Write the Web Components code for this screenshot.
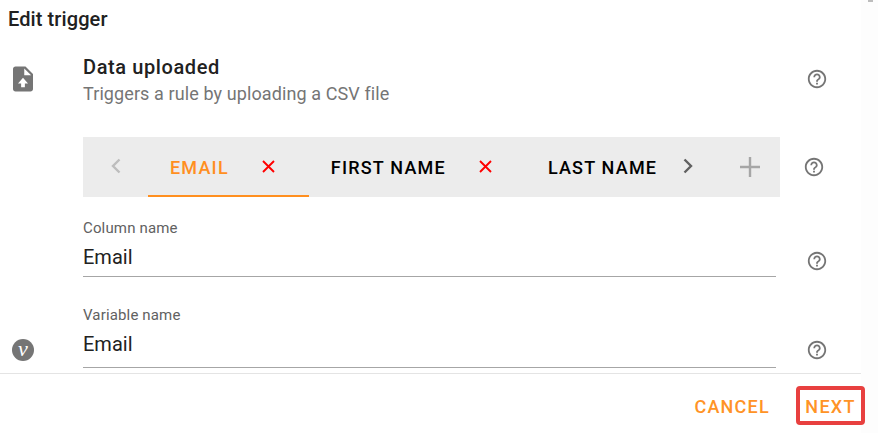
<!DOCTYPE html>
<html>
<head>
<meta charset="utf-8">
<title>Edit trigger</title>
<style>
  html, body { margin: 0; padding: 0; background: #fff; }
  body { font-family: Roboto, "Liberation Sans", sans-serif; }
</style>
</head>
<body>
<edit-trigger-dialog>
  <trigger-row slot="rows">
    <svg slot="lead" width="30" height="30" viewBox="0 0 24 24" fill="#757575"><path d="M14 2H6c-1.100 0-2 .9-2 2v16c0 1.100.9 2 2 2h12c1.100 0 2-.9 2-2V8l-6-6zm-1 7V3.500L18.500 9H13zM12 11l4 4.500h-2.500v3h-3v-3H8l4-4.500z" fill-rule="evenodd"/></svg>
    <trigger-summary heading="Data uploaded" text="Triggers a rule by uploading a CSV file"></trigger-summary>
    <help-icon slot="help"></help-icon>
  </trigger-row>
  <tab-strip slot="rows">
    <tab-item active label="EMAIL"></tab-item>
    <tab-item label="FIRST NAME"></tab-item>
    <tab-item label="LAST NAME"></tab-item>
  </tab-strip>
  <text-field slot="rows" label="Column name" value="Email"></text-field>
  <text-field slot="rows" label="Variable name" value="Email" variable></text-field>
  <flat-button slot="actions" label="CANCEL"></flat-button>
  <flat-button slot="actions" label="NEXT" marked></flat-button>
</edit-trigger-dialog>

<script>
//Help icon
class HelpIcon extends HTMLElement {
  constructor() {
    super();
    this.attachShadow({ mode: "open" });
    this.shadowRoot.innerHTML = `
      <style>
      :host { display: block; width: 22px; height: 22px; }
      svg { display: block; }
      </style>
      <svg width="22" height="22" viewBox="0 0 24 24" fill="#757575"><path d="M11 18h2v-2h-2v2zm1-16C6.480 2 2 6.480 2 12s4.480 10 10 10 10-4.480 10-10S17.520 2 12 2zm0 18c-4.410 0-8-3.590-8-8s3.590-8 8-8 8 3.590 8 8-3.590 8-8 8zm0-14c-2.210 0-4 1.790-4 4h2c0-1.100.9-2 2-2s2 .9 2 2c0 2-3 1.750-3 5h2c0-2.250 3-2.500 3-5 0-2.210-1.790-4-4-4z"/></svg>
    `;
  }
}
customElements.define("help-icon", HelpIcon);

//Top row with the trigger name
class TriggerRow extends HTMLElement {
  constructor() {
    super();
    this.attachShadow({ mode: "open" });
    this.shadowRoot.innerHTML = `
      <style>
      :host { display: grid; grid-template-columns: 83px 723px 22px; height: 54px; margin-top: 16px; }
      .lead { padding: 10px 0 0 8px; }
      .help { padding-top: 14px; }
      </style>
      <div class="lead"><slot name="lead"></slot></div>
      <div><slot></slot></div>
      <div class="help"><slot name="help"></slot></div>
    `;
  }
}
customElements.define("trigger-row", TriggerRow);

class TriggerSummary extends HTMLElement {
  constructor() {
    super();
    this.attachShadow({ mode: "open" });
    this.shadowRoot.innerHTML = `
      <style>
      :host { display: block; }
      .heading { font-size: 20px; font-weight: 500; line-height: 26px; letter-spacing: .6px; color: #212121; }
      .text { font-size: 18px; line-height: 26px; margin-top: 1px; letter-spacing: .1px; color: #757575; }
      </style>
      <div class="heading">${this.getAttribute("heading")}</div>
      <div class="text">${this.getAttribute("text")}</div>
    `;
  }
}
customElements.define("trigger-summary", TriggerSummary);

//Tabs
class TabItem extends HTMLElement {
  constructor() {
    super();
    this.attachShadow({ mode: "open" });
    this.shadowRoot.innerHTML = `
      <style>
      :host { display: flex; flex: none; align-items: center; height: 60px; box-sizing: border-box; padding: 2px 33px 0 22px; color: #000; border-bottom: 2px solid transparent; }
      :host([active]) { color: #ff8f1f; border-bottom-color: #ff8f1f; }
      .label { font-size: 18px; font-weight: 500; letter-spacing: 1.2px; margin-right: 32px; white-space: nowrap; }
      svg { display: block; flex: none; margin-top: -2px; }
      </style>
      <span class="label">${this.getAttribute("label")}</span>
      <svg width="15" height="15" viewBox="0 0 15 15"><path d="M2 2l11 11M13 2L2 13" stroke="#ff0000" stroke-width="1.900" fill="none"/></svg>
    `;
  }
}
customElements.define("tab-item", TabItem);

class TabStrip extends HTMLElement {
  constructor() {
    super();
    this.attachShadow({ mode: "open" });
    this.shadowRoot.innerHTML = `
      <style>
      :host { display: grid; grid-template-columns: 697px 1fr; margin: 29px 0 0 83px; align-items: center; }
      .bar { display: flex; align-items: center; height: 60px; background: #ececec; }
      .arrow { flex: none; display: flex; justify-content: center; align-items: center; margin-top: -2px; }
      .prev { width: 65px; }
      .next { width: 40px; }
      .tabs { display: flex; width: 520px; flex: none; overflow: hidden; }
      .add { flex: none; margin-left: 32px; display: block; }
      .help { padding-left: 23px; }
      svg { display: block; }
      </style>
      <div class="bar">
        <div class="arrow prev"><svg width="14" height="18" viewBox="0 0 14 18"><path d="M10.500 2.500L4 9l6.500 6.500" stroke="#bdbdbd" stroke-width="2.400" fill="none"/></svg></div>
        <div class="tabs"><slot></slot></div>
        <div class="arrow next"><svg width="14" height="18" viewBox="0 0 14 18"><path d="M3.500 2.500L10 9l-6.500 6.500" stroke="#616161" stroke-width="2.400" fill="none"/></svg></div>
        <svg class="add" width="20" height="20" viewBox="0 0 20 20"><path d="M10 0v20M0 10h20" stroke="#a6a6a6" stroke-width="2.400" fill="none"/></svg>
      </div>
      <div class="help"><help-icon></help-icon></div>
    `;
  }
}
customElements.define("tab-strip", TabStrip);

//Text field
class TextField extends HTMLElement {
  constructor() {
    super();
    this.attachShadow({ mode: "open" });
    const badge = this.hasAttribute("variable") ? `<span class="badge">v</span>` : "";
    this.shadowRoot.innerHTML = `
      <style>
      :host { display: grid; grid-template-columns: 83px 693px 30px 22px; margin-top: 21px; }
      :host([variable]) { margin-top: 28px; }
      .lead { position: relative; }
      .badge { position: absolute; left: 12px; top: 34px; width: 22px; height: 22px; border-radius: 50%; background: #757575; color: #fff; font: italic 22px/19px "Liberation Serif", serif; text-align: center; }
      .label { font-size: 15px; line-height: 20px; letter-spacing: .15px; color: #616161; }
      .value { font-size: 20px; line-height: 30px; margin-top: 4px; padding-bottom: 4px; color: #212121; border-bottom: 1px solid #a6a6a6; }
      :host([variable]) .value { padding-bottom: 8px; }
      .help { grid-column: 4; padding-top: 32px; }
      :host([variable]) .help { padding-top: 34px; }
      </style>
      <div class="lead">${badge}</div>
      <div>
        <div class="label">${this.getAttribute("label")}</div>
        <div class="value">${this.getAttribute("value")}</div>
      </div>
      <div class="help"><help-icon></help-icon></div>
    `;
  }
}
customElements.define("text-field", TextField);

//Footer buttons
class FlatButton extends HTMLElement {
  constructor() {
    super();
    this.attachShadow({ mode: "open" });
    this.shadowRoot.innerHTML = `
      <style>
      :host { display: flex; align-items: center; justify-content: center; height: 39px; padding-top: 1px; box-sizing: border-box; font-size: 18px; font-weight: 500; letter-spacing: 1.25px; color: #ff9326; cursor: pointer; }
      :host([marked]) { width: 69px; border: 4px solid #e8403f; border-radius: 4px; margin-left: 26px; }
      </style>
      <span>${this.getAttribute("label")}</span>
    `;
  }
}
customElements.define("flat-button", FlatButton);

//Dialog
class EditTriggerDialog extends HTMLElement {
  constructor() {
    super();
    this.attachShadow({ mode: "open" });
    this.shadowRoot.innerHTML = `
      <style>
      :host { display: flex; width: 878px; height: 433px; overflow: hidden; background: #fdfdfd; }
      .dialog { display: flex; flex-direction: column; width: 861px; flex: none; background: #fff; }
      .title { font-size: 20px; font-weight: 500; line-height: 38px; padding-left: 8px; letter-spacing: .1px; color: #212121; }
      .body { height: 335px; overflow: hidden; }
      .footer { border-top: 1px solid #e4e4e4; padding-top: 12px; }
      .actions { display: flex; justify-content: flex-end; align-items: center; margin-right: -4px; }
      .thumb { width: 5px; height: 2px; margin-left: 7px; background: #bdbdbd; }
      </style>
      <div class="dialog">
        <div class="title">Edit trigger</div>
        <div class="body"><slot name="rows"></slot></div>
        <div class="footer"><div class="actions"><slot name="actions"></slot></div></div>
      </div>
      <div class="thumb"></div>
    `;
  }
}
customElements.define("edit-trigger-dialog", EditTriggerDialog);
</script>
</body>
</html>
